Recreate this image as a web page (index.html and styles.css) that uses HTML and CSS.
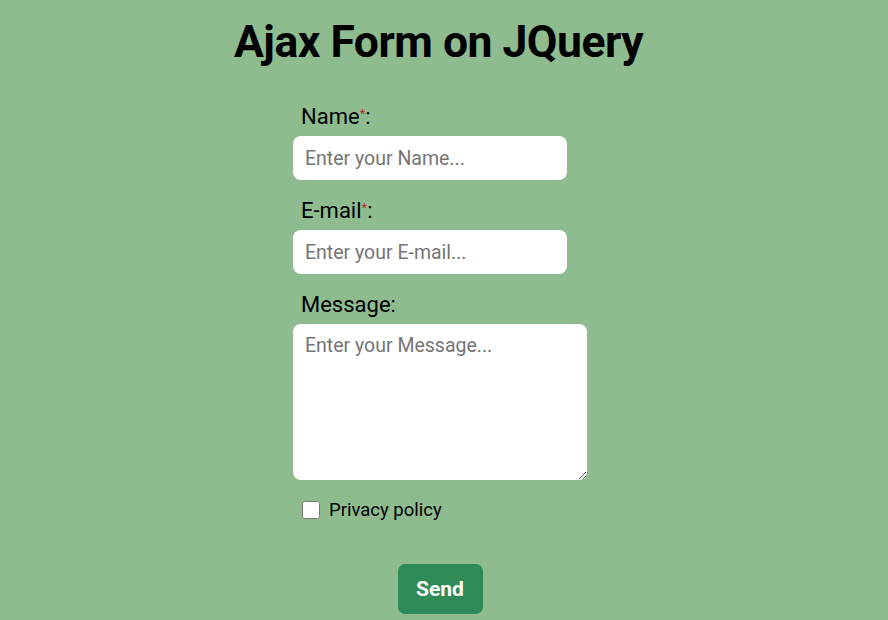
FILE: index.html
```
<!DOCTYPE html>
<html lang="en">
<head>
<meta charset="utf-8">
<title>Ajax Form on JQuery</title>
<link rel="stylesheet" href="styles.css">
</head>
<body>
<h1 class="title">Ajax Form on JQuery</h1>
<form class="form">
  <label class="label" for="name">Name<span class="req">*</span>:</label>
  <input class="field" id="name" type="text" placeholder="Enter your Name...">
  <label class="label" for="email">E-mail<span class="req">*</span>:</label>
  <input class="field" id="email" type="text" placeholder="Enter your E-mail...">
  <label class="label" for="msg">Message:</label>
  <textarea class="area" id="msg" placeholder="Enter your Message..."></textarea>
  <label class="check"><input class="box" type="checkbox"> <span>Privacy policy</span></label>
  <div class="actions"><button class="send" type="button">Send</button></div>
</form>
</body>
</html>
```
FILE: styles.css
```
html, body {
  margin: 0;
  padding: 0;
  background: #8fbc8f;
  overflow: hidden;
}
body {
  font-family: Roboto, "DejaVu Sans", sans-serif;
  color: #000;
}
.title {
  margin: 14px 0 0;
  padding-right: 11px;
  text-align: center;
  font-size: 44.5px;
  line-height: 56px;
  font-weight: bold;
  letter-spacing: -0.5px;
}
.form {
  width: 302px;
  margin: 34px auto 0;
  display: flex;
  flex-direction: column;
  align-items: flex-start;
}
.label {
  margin: 0 0 6px 8px;
  font-size: 22px;
  line-height: 26px;
}
.req {
  color: #b03030;
  font-size: 13px;
  line-height: 0;
  vertical-align: 6px;
}
.field, .area {
  box-sizing: border-box;
  border: none;
  border-radius: 8px;
  background: #fff;
  font-family: inherit;
  font-size: 19.5px;
  padding: 0 12px;
  color: #000;
  outline: none;
}
.field {
  width: 274px;
  height: 44px;
  margin-bottom: 18px;
}
.area {
  width: 294px;
  height: 156px;
  padding-top: 10px;
  resize: vertical;
}
.field::placeholder, .area::placeholder {
  color: #757575;
}
.check {
  display: flex;
  align-items: center;
  margin: 19px 0 0 9px;
  font-size: 18.5px;
  line-height: 22px;
}
.box {
  width: 18px;
  height: 18px;
  margin: 0 9px 0 0;
}
.actions {
  width: 294px;
  display: flex;
  justify-content: center;
  margin-top: 43px;
}
.send {
  width: 85px;
  height: 50px;
  border: none;
  border-radius: 7px;
  background: #2e8b57;
  color: #fff;
  font-family: inherit;
  font-size: 21px;
  font-weight: bold;
}
```
